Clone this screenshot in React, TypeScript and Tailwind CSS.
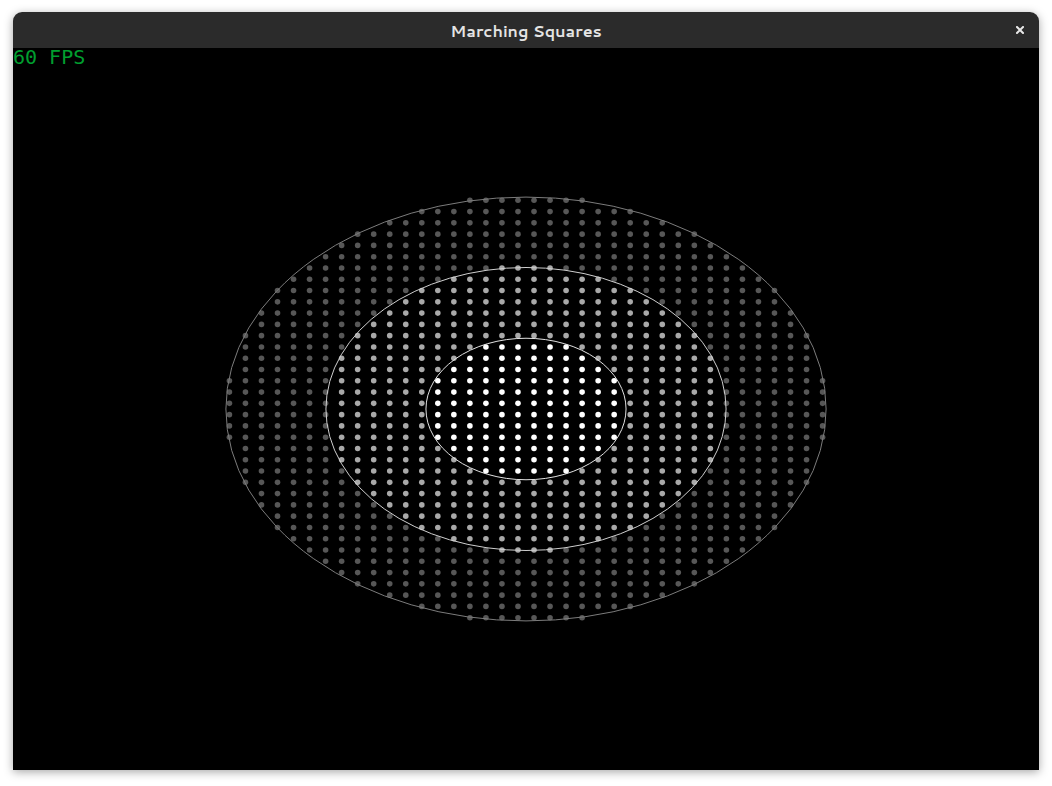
import React from "react";

const COLS = 64;
const ROWS = 64;
const W = 1026;
const H = 722;
const CW = W / COLS;
const CH = H / ROWS;
const CX = W / 2;
const CY = H / 2;

// contour radii in normalized (-1..1) canvas space
const LEVELS = [0.195, 0.39, 0.585];
// the sampled field is a hair taller than it is wide
const Y_SQUASH = 0.99;

function dotColor(d: number) {
  if (d < 0.197) return "#ffffff";
  if (d < 0.39) return "#a9a9a9";
  if (d < 0.585) return "#575757";
  return null;
}

function Field() {
  const dots: React.ReactNode[] = [];
  for (let j = 0; j < ROWS; j++) {
    for (let i = 0; i < COLS; i++) {
      const x = (i + 0.5) * CW;
      const y = (j + 0.5) * CH;
      const nx = (x - CX) / CX;
      const ny = ((y - CY) / CY) * Y_SQUASH;
      const c = dotColor(Math.sqrt(nx * nx + ny * ny));
      if (!c) continue;
      dots.push(<circle key={`${i}-${j}`} cx={x} cy={y} r={2.8} fill={c} />);
    }
  }

  return (
    <svg width={W} height={H} viewBox={`0 0 ${W} ${H}`} className="block">
      {dots}
      <ellipse cx={CX} cy={CY} rx={CX * LEVELS[2]} ry={CY * 0.587} fill="none" stroke="#7c7c7c" strokeWidth={1} />
      <ellipse cx={CX} cy={CY} rx={CX * LEVELS[1]} ry={CY * 0.392} fill="none" stroke="#cfcfcf" strokeWidth={1} />
      <ellipse cx={CX} cy={CY} rx={CX * LEVELS[0]} ry={CY * 0.196} fill="none" stroke="#e2e2e2" strokeWidth={1} />
    </svg>
  );
}

export default function App() {
  return (
    <div className="w-[1052px] h-[786px] bg-white pt-[12px] px-[13px] overflow-hidden">
      <div className="w-[1026px] rounded-t-[9px] overflow-hidden shadow-[0_2px_10px_rgba(0,0,0,0.35)]">
        {/* header bar */}
        <div className="relative h-[36px] bg-[#2b2b2b] flex items-center justify-center">
          <span className="text-[#e4e4e4] text-[16px] font-bold leading-none font-['Cantarell','Noto_Sans',sans-serif] pt-[1px]">
            Marching Squares
          </span>
          <button className="absolute right-[15px] top-[14px] w-[8px] h-[8px]">
            <svg width="8" height="8" viewBox="0 0 8 8" className="block">
              <path d="M1 1 L7 7 M7 1 L1 7" stroke="#e8e8e8" strokeWidth="2" strokeLinecap="square" />
            </svg>
          </button>
        </div>

        {/* canvas */}
        <div className="relative h-[722px] bg-black">
          <Field />
          <div className="absolute left-0 top-[-1px] text-[#009e2f] text-[20px] leading-[20px] font-['DejaVu_Sans_Mono',monospace]">
            60 FPS
          </div>
        </div>
      </div>
    </div>
  );
}
